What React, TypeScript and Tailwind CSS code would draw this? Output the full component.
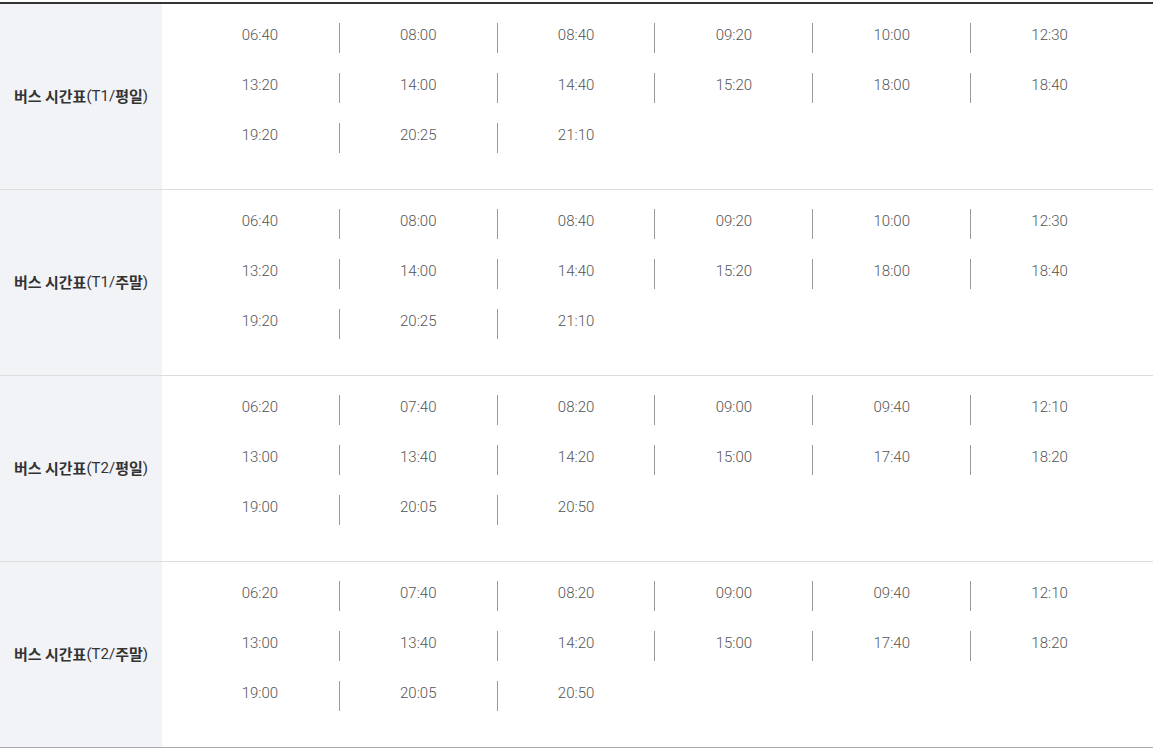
const schedules = [
  {
    code: 'T1',
    day: '평일',
    times: ['06:40', '08:00', '08:40', '09:20', '10:00', '12:30', '13:20', '14:00', '14:40', '15:20', '18:00', '18:40', '19:20', '20:25', '21:10'],
  },
  {
    code: 'T1',
    day: '주말',
    times: ['06:40', '08:00', '08:40', '09:20', '10:00', '12:30', '13:20', '14:00', '14:40', '15:20', '18:00', '18:40', '19:20', '20:25', '21:10'],
  },
  {
    code: 'T2',
    day: '평일',
    times: ['06:20', '07:40', '08:20', '09:00', '09:40', '12:10', '13:00', '13:40', '14:20', '15:00', '17:40', '18:20', '19:00', '20:05', '20:50'],
  },
  {
    code: 'T2',
    day: '주말',
    times: ['06:20', '07:40', '08:20', '09:00', '09:40', '12:10', '13:00', '13:40', '14:20', '15:00', '17:40', '18:20', '19:00', '20:05', '20:50'],
  },
];

export default function App() {
  return (
    <div className="min-h-screen bg-white pt-[2px]">
      <div className="w-[1153px] border-t-2 border-[#333]">
        {schedules.map((s, i) => (
          <div
            key={i}
            className={`flex h-[186px] border-b ${i === schedules.length - 1 ? 'border-[#aaa]' : 'border-[#ddd]'}`}
          >
            {/* 구분 */}
            <div className="w-[162px] shrink-0 bg-[#f2f3f7] flex items-center pl-[14px] text-[15px] text-[#333]">
              <span className="font-bold font-['Noto_Sans_CJK_KR',sans-serif]">버스 시간표</span>
              <span className="font-['Roboto','Noto_Sans_CJK_KR',sans-serif]">({s.code}/</span>
              <span className="font-bold font-['Noto_Sans_CJK_KR',sans-serif]">{s.day}</span>
              <span className="font-['Roboto',sans-serif]">)</span>
            </div>

            {/* 시간 */}
            <div className="flex-1 pl-[19px] pt-[19px]">
              <div className="grid w-[947px] grid-cols-6 gap-y-[20px]">
                {s.times.map((t, j) => (
                  <div
                    key={j}
                    className={`h-[30px] pt-[3px] text-center leading-[18px] font-['Roboto',sans-serif] font-light text-[15px] text-[#555] ${j % 6 !== 0 ? 'border-l border-[#999]' : ''}`}
                  >
                    {t}
                  </div>
                ))}
              </div>
            </div>
          </div>
        ))}
      </div>
    </div>
  );
}
